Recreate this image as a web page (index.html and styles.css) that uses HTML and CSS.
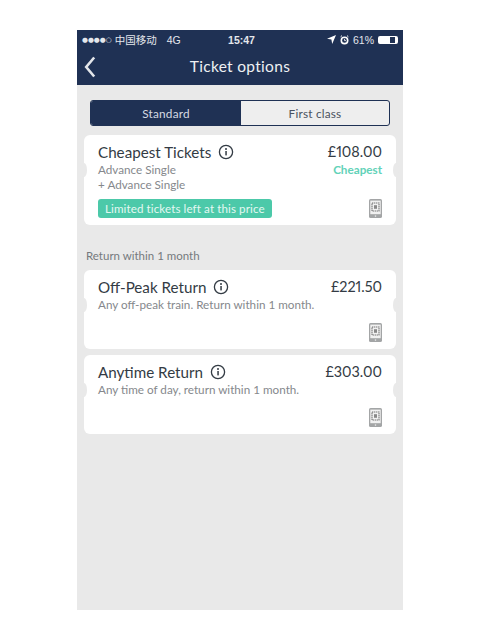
FILE: index.html
```html
<!DOCTYPE html>
<html lang="en">
<head>
<meta charset="utf-8">
<title>Ticket options</title>
<link rel="stylesheet" href="styles.css">
</head>
<body>
<svg class="defs" width="0" height="0" aria-hidden="true">
  <symbol id="info" viewBox="0 0 16 16">
    <circle cx="8" cy="8" r="6.6" fill="none" stroke="#333b44" stroke-width="1.3"/>
    <rect x="7.3" y="7" width="1.5" height="4.4" fill="#333b44"/>
    <circle cx="8" cy="5" r="1" fill="#333b44"/>
  </symbol>
  <symbol id="mobile" viewBox="0 0 13 19">
    <rect x="0" y="0" width="13" height="19" rx="1.6" fill="#a3a5a6"/>
    <rect x="1.3" y="1.6" width="10.4" height="13.6" fill="#f1f1f1"/>
    <rect x="3" y="4" width="7" height="8" fill="none" stroke="#777" stroke-width="1.1" stroke-dasharray="1.4 .6"/>
    <rect x="5" y="6.2" width="3" height="3.6" fill="#888"/>
    <circle cx="6.5" cy="17.1" r=".8" fill="#e6e6e6"/>
  </symbol>
</svg>
<main class="phone">
  <header class="top">
    <div class="status">
      <span class="status-left"><span class="dots">●●●●○</span><span class="carrier">中国移动</span><span class="net">4G</span></span>
      <span class="clock">15:47</span>
      <span class="status-right">
        <svg class="st-icon" width="9" height="9" viewBox="0 0 9 9"><path d="M9 0 L0 3.8 L4.4 4.6 L5.2 9 Z" fill="#fff"/></svg>
        <svg class="st-icon" width="9" height="10" viewBox="0 0 9 10"><circle cx="4.5" cy="5.4" r="3.2" fill="none" stroke="#fff" stroke-width="1.6"/><path d="M4.5 3.8V5.6H6" fill="none" stroke="#fff" stroke-width=".8"/><path d="M.6 1.8 2 .6M8.4 1.8 7 .6" stroke="#fff" stroke-width="1"/></svg>
        <span>61%</span>
        <span class="battery"><span class="battery-fill"></span></span>
      </span>
    </div>
    <div class="nav">
      <svg class="back" width="12" height="22" viewBox="0 0 12 22"><path d="M10.2 1.5 2.2 11l8 9.5" fill="none" stroke="#e3e6ea" stroke-width="2.6"/></svg>
      <h1 class="title">Ticket options</h1>
    </div>
  </header>

  <div class="content">
    <div class="segments">
      <span class="seg seg-on">Standard</span>
      <span class="seg">First class</span>
    </div>

    <section class="card card-first">
      <div class="row">
        <h2 class="name">Cheapest Tickets <svg class="info" width="16" height="16"><use href="#info"/></svg></h2>
        <span class="price">£108.00</span>
      </div>
      <div class="row row-sub">
        <p class="desc">Advance Single<br>+ Advance Single</p>
        <span class="tag">Cheapest</span>
      </div>
      <div class="row row-foot">
        <span class="badge">Limited tickets left at this price</span>
        <svg class="mobile" width="13" height="19"><use href="#mobile"/></svg>
      </div>
    </section>

    <p class="group">Return within 1 month</p>

    <section class="card card-plain">
      <div class="row">
        <h2 class="name">Off-Peak Return <svg class="info" width="16" height="16"><use href="#info"/></svg></h2>
        <span class="price">£221.50</span>
      </div>
      <div class="row-sub"><p class="desc">Any off-peak train. Return within 1 month.</p></div>
      <div class="row row-end">
        <svg class="mobile" width="13" height="19"><use href="#mobile"/></svg>
      </div>
    </section>

    <section class="card card-plain">
      <div class="row">
        <h2 class="name">Anytime Return <svg class="info" width="16" height="16"><use href="#info"/></svg></h2>
        <span class="price">£303.00</span>
      </div>
      <div class="row-sub"><p class="desc">Any time of day, return within 1 month.</p></div>
      <div class="row row-end">
        <svg class="mobile" width="13" height="19"><use href="#mobile"/></svg>
      </div>
    </section>
  </div>
</main>
</body>
</html>
```
FILE: styles.css
```css
* { box-sizing: border-box; }
html, body { margin: 0; background: #fff; }
body {
  width: 480px;
  height: 640px;
  padding: 30px 0 0 77px;
  overflow: hidden;
  font-family: Lato, "Noto Sans CJK SC", sans-serif;
  color: #333b44;
}
.defs { position: absolute; }
.phone {
  width: 326px;
  height: 580px;
  background: #e9e9e9;
  display: flex;
  flex-direction: column;
}
.top {
  height: 55px;
  background: #1f3154;
  color: #fff;
  flex: none;
}
.status {
  height: 19px;
  padding: 0 5px 0 5px;
  display: grid;
  grid-template-columns: 1fr auto 1fr;
  align-items: center;
  font-size: 10.5px;
  font-family: "Liberation Sans", "Noto Sans CJK SC", sans-serif;
  color: #e4e7ec;
}
.status-left { display: flex; align-items: center; }
.dots { font-family: "DejaVu Sans", sans-serif; font-size: 6.8px; }
.carrier { margin-left: 3px; }
.net { margin-left: 10px; }
.clock { font-weight: 700; margin-left: 3px; }
.status-right { display: flex; align-items: center; justify-content: flex-end; gap: 4px; }
.battery {
  width: 20px;
  height: 8px;
  border: 1px solid #fff;
  border-radius: 2px;
  display: block;
  border-right-width: 3px;
}
.battery-fill { display: block; width: 11px; height: 100%; background: #fff; }
.nav {
  height: 36px;
  position: relative;
  display: flex;
  align-items: center;
  justify-content: center;
}
.back { position: absolute; left: 7px; top: 7px; }
.title {
  margin: 0 0 2px;
  font-size: 15.5px;
  font-weight: 400;
  letter-spacing: .3px;
  color: #eef0f3;
}
.content {
  padding: 15px 7px 0;
  display: flex;
  flex-direction: column;
}
.segments {
  margin: 0 6px 9px;
  height: 26px;
  display: grid;
  grid-template-columns: 150px 1fr;
  border: 1px solid #1f3154;
  border-radius: 3px;
  overflow: hidden;
  font-size: 11.8px;
  color: #4a5260;
  background: #eeeeee;
}
.seg { display: flex; align-items: center; justify-content: center; letter-spacing: .2px; }
.seg-on { background: #1f3154; color: #d5dae2; }
.card {
  position: relative;
  background: #fff;
  border-radius: 6px;
  padding: 8px 14px 0;
  flex: none;
}
.card::before, .card::after {
  content: "";
  position: absolute;
  top: 28px;
  width: 6px;
  height: 14px;
  background: #e9e9e9;
  border-radius: 50%;
}
.card::before { left: -3px; }
.card::after { right: -3px; }
.card-first { height: 90px; }
.card-plain { height: 79px; margin-bottom: 6px; }
.row { display: flex; justify-content: space-between; align-items: flex-start; }
.row-sub { margin-top: 1px; }
.row-foot { margin-top: 7px; align-items: center; }
.row-end { justify-content: flex-end; margin-top: 11px; }
.name {
  margin: 0;
  font-size: 15.2px;
  line-height: 18px;
  font-weight: 400;
  color: #333b44;
  display: flex;
  align-items: center;
  gap: 7px;
}
.price { font-size: 14.4px; line-height: 18px; color: #333b44; font-variant-numeric: proportional-nums; }
.desc { margin: 0; font-size: 11.7px; line-height: 15px; color: #85888c; }
.tag { font-size: 11.7px; line-height: 15px; font-weight: 700; color: #62d2b8; }
.badge {
  height: 19px;
  padding: 0 7px;
  background: #4cc9a9;
  border-radius: 3px;
  color: #e4f8f2;
  font-size: 11.6px;
  line-height: 19px;
  letter-spacing: .1px;
}
.group {
  margin: 23px 0 7px 2px;
  height: 15px;
  font-size: 11.5px;
  line-height: 15px;
  color: #75797d;
}
```
